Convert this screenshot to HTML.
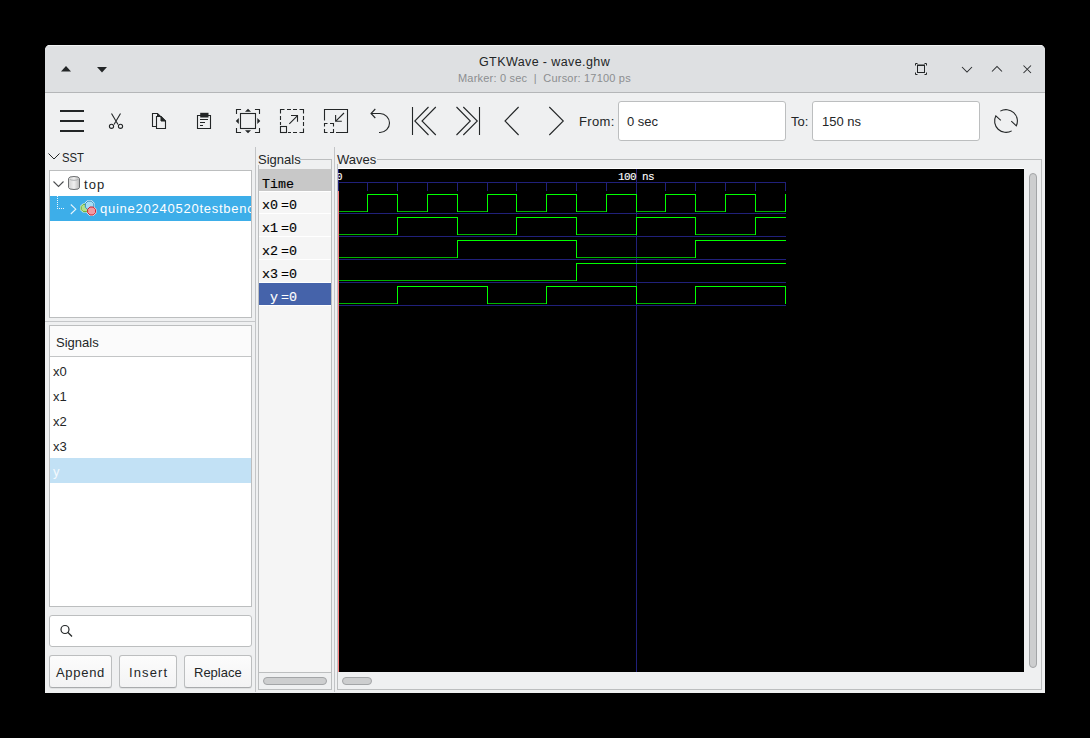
<!DOCTYPE html>
<html><head><meta charset="utf-8">
<style>
*{box-sizing:border-box;margin:0;padding:0}
html,body{width:1090px;height:738px;background:#000;overflow:hidden;font-family:"Liberation Sans",sans-serif;color:#232627}
.a{position:absolute}
.t{position:absolute;white-space:nowrap;line-height:1;font-size:13px}
.m{position:absolute;white-space:nowrap;line-height:1;font-family:"Liberation Mono",monospace;font-size:13.33px;color:#000;-webkit-text-stroke:0.15px currentColor}
svg{position:absolute;left:0;top:0;overflow:visible}
</style></head><body>
<!-- window -->
<div class="a" style="left:45px;top:45px;width:1000px;height:648px;background:#eff0f1;border-radius:5px 5px 0 0;overflow:hidden">
  <div class="a" style="left:0;top:0;width:1000px;height:47px;background:#dee0e2;border-top:1px solid #f2f3f4"></div>
  <div class="a" style="left:0;top:47px;width:1000px;height:1px;background:#b4b6b8"></div>
</div>
<!-- title -->
<div class="t" id="title" style="left:479px;top:56px;font-size:12.5px;letter-spacing:0.4px;color:#232627">GTKWave - wave.ghw</div>
<div class="t" id="sub" style="left:458px;top:73px;font-size:11px;letter-spacing:0.2px;color:#8c8e90">Marker: 0 sec &nbsp;|&nbsp; Cursor: 17100 ps</div>

<!-- list boxes -->
<div class="a" style="left:49px;top:170px;width:203px;height:148px;background:#fff;border:1px solid #bcbebf"></div>
<div class="a" style="left:50px;top:196px;width:201px;height:25px;background:#3daee9"></div>
<div class="a" style="left:45px;top:321px;width:210px;height:1px;background:#c5c7c9"></div>
<div class="a" style="left:49px;top:325px;width:203px;height:282px;background:#fff;border:1px solid #bcbebf"></div>
<div class="a" style="left:50px;top:326px;width:201px;height:31px;background:#fbfbfb;border-bottom:1px solid #c3c5c6"></div>
<div class="a" style="left:50px;top:458px;width:201px;height:25px;background:#c2e1f5"></div>
<!-- search -->
<div class="a" style="left:49px;top:615px;width:203px;height:32px;background:#fff;border:1px solid #bcbebf;border-radius:3px"></div>
<!-- buttons -->
<div class="a btn" style="left:49px;top:655px;width:63px;height:33px"></div>
<div class="a btn" style="left:119px;top:655px;width:58px;height:33px"></div>
<div class="a btn" style="left:184px;top:655px;width:68px;height:33px"></div>
<style>.btn{background:linear-gradient(#fcfcfc,#f3f3f4);border:1px solid #bcbebf;border-bottom-color:#a9abad;border-radius:3px;box-shadow:0 1px 0 rgba(0,0,0,0.06)}</style>

<!-- pane separators -->
<div class="a" style="left:255px;top:147px;width:1px;height:545px;background:#c3c5c7"></div>
<div class="a" style="left:334px;top:147px;width:1px;height:545px;background:#c3c5c7"></div>

<!-- signals frame -->
<div class="a" style="left:300px;top:159px;width:32px;height:1px;background:#bcbebf"></div>
<div class="a" style="left:258px;top:165px;width:1px;height:525px;background:#bcbebf"></div>
<div class="a" style="left:331px;top:159px;width:1px;height:531px;background:#bcbebf"></div>
<div class="a" style="left:258px;top:689px;width:74px;height:1px;background:#bcbebf"></div>
<div class="a" style="left:259px;top:169px;width:72px;height:503px;background:#f5f5f5"></div>
<div class="a" style="left:259px;top:672px;width:72px;height:1px;background:#bcbebf"></div>
<div class="a" style="left:259px;top:169px;width:72px;height:22px;background:#c8c8c8"></div>
<div class="a" style="left:259px;top:191px;width:72px;height:1px;background:#fff"></div>
<div class="a" style="left:259px;top:213px;width:72px;height:1px;background:#fff"></div>
<div class="a" style="left:259px;top:236px;width:72px;height:1px;background:#fff"></div>
<div class="a" style="left:259px;top:259px;width:72px;height:1px;background:#fff"></div>
<div class="a" style="left:259px;top:282px;width:72px;height:1px;background:#fff"></div>
<div class="a" style="left:259px;top:283px;width:72px;height:22px;background:#4563aa"></div>
<div class="a" style="left:259px;top:305px;width:72px;height:1px;background:#fff"></div>
<div class="a sl" style="left:263px;top:677px;width:64px;height:8px"></div>

<!-- waves frame -->
<div class="a" style="left:377px;top:159px;width:665px;height:1px;background:#bcbebf"></div>
<div class="a" style="left:337px;top:164px;width:1px;height:526px;background:#bcbebf"></div>
<div class="a" style="left:1041px;top:159px;width:1px;height:531px;background:#bcbebf"></div>
<div class="a" style="left:337px;top:689px;width:705px;height:1px;background:#bcbebf"></div>
<div class="a" style="left:338px;top:168px;width:686px;height:1px;background:#fff"></div>
<div class="a" style="left:338px;top:169px;width:686px;height:503px;background:#000"></div>
<div class="a sl" style="left:342px;top:677px;width:30px;height:8px"></div>
<div class="a sl" style="left:1029px;top:173px;width:8px;height:495px"></div>
<style>.sl{background:#cdcecf;border:1px solid #a3a5a7;border-radius:4px}</style>

<svg width="1090" height="738">
<path d="M338 182h448v1h-448zM367 183h1v8h-1zM397 183h1v8h-1zM427 183h1v8h-1zM457 183h1v8h-1zM487 183h1v8h-1zM516 183h1v8h-1zM546 183h1v8h-1zM576 183h1v8h-1zM606 183h1v8h-1zM665 183h1v8h-1zM695 183h1v8h-1zM725 183h1v8h-1zM755 183h1v8h-1zM785 183h1v8h-1zM338 213h448v1h-448zM338 236h448v1h-448zM338 259h448v1h-448zM338 282h448v1h-448zM338 305h448v1h-448zM636 169h1v503h-1zM338 169h1v22h-1z" fill="#20207a"/>
<path d="M339 211h29v1h-29zM397 211h31v1h-31zM457 211h31v1h-31zM516 211h31v1h-31zM576 211h31v1h-31zM636 211h30v1h-30zM695 211h31v1h-31zM755 211h31v1h-31zM339 234h59v1h-59zM457 234h60v1h-60zM576 234h61v1h-61zM695 234h61v1h-61zM339 257h119v1h-119zM576 257h120v1h-120zM339 280h238v1h-238zM339 303h59v1h-59zM487 303h60v1h-60zM636 303h60v1h-60z" fill="#00b400"/>
<path d="M367 194h31v1h-31zM427 194h31v1h-31zM487 194h30v1h-30zM546 194h31v1h-31zM606 194h31v1h-31zM665 194h31v1h-31zM725 194h31v1h-31zM397 217h61v1h-61zM516 217h61v1h-61zM636 217h60v1h-60zM755 217h31v1h-31zM457 240h120v1h-120zM695 240h91v1h-91zM576 263h210v1h-210zM397 286h91v1h-91zM546 286h91v1h-91zM695 286h91v1h-91zM367 194h1v18h-1zM397 194h1v18h-1zM427 194h1v18h-1zM457 194h1v18h-1zM487 194h1v18h-1zM516 194h1v18h-1zM546 194h1v18h-1zM576 194h1v18h-1zM606 194h1v18h-1zM636 194h1v18h-1zM665 194h1v18h-1zM695 194h1v18h-1zM725 194h1v18h-1zM755 194h1v18h-1zM785 194h1v18h-1zM397 217h1v18h-1zM457 217h1v18h-1zM516 217h1v18h-1zM576 217h1v18h-1zM636 217h1v18h-1zM695 217h1v18h-1zM755 217h1v18h-1zM457 240h1v18h-1zM576 240h1v18h-1zM695 240h1v18h-1zM576 263h1v18h-1zM397 286h1v18h-1zM487 286h1v18h-1zM546 286h1v18h-1zM636 286h1v18h-1zM695 286h1v18h-1zM785 286h1v18h-1z" fill="#00ff00"/>
<path d="M338 191h1v481h-1z" fill="#ff8080"/>

</svg>
<div class="a" style="left:338px;top:169px;width:686px;height:20px;overflow:hidden">
  <div class="m" style="left:-2px;top:2.5px;font-size:11px;color:#fff;-webkit-text-stroke:0.1px #fff">0</div>
  <div class="m" style="left:280px;top:3px;font-size:11px;letter-spacing:-0.6px;color:#fff;-webkit-text-stroke:0.1px #fff">100 ns</div>
</div>

<!-- texts -->
<div class="t" style="left:62px;top:151px;transform:scaleX(0.87);transform-origin:0 0">SST</div>
<div class="t" style="left:84px;top:178px;letter-spacing:1.1px">top</div>
<div class="a" style="left:50px;top:196px;width:201px;height:25px;overflow:hidden"><div class="t" style="left:50px;top:6px;color:#fff;letter-spacing:0.75px">quine20240520testbench</div></div>
<div class="t" style="left:56px;top:336px">Signals</div>
<div class="t" style="left:53px;top:365px">x0</div>
<div class="t" style="left:53px;top:390px">x1</div>
<div class="t" style="left:53px;top:415px">x2</div>
<div class="t" style="left:53px;top:440px">x3</div>
<div class="t" style="left:53px;top:465px;color:#f4f9fd">y</div>
<div class="t" style="left:56px;top:666px;letter-spacing:0.7px">Append</div>
<div class="t" style="left:129px;top:666px;letter-spacing:1.1px">Insert</div>
<div class="t" style="left:194px;top:666px">Replace</div>
<div class="t" style="left:258px;top:153px">Signals</div>
<div class="t" style="left:337px;top:153px">Waves</div>
<div class="t" style="left:579px;top:115px;letter-spacing:0.35px">From:</div>
<div class="t" style="left:791px;top:115px">To:</div>
<div class="a" style="left:618px;top:101px;width:168px;height:40px;background:#fff;border:1px solid #bcbebf;border-radius:3px"></div>
<div class="a" style="left:812px;top:101px;width:168px;height:40px;background:#fff;border:1px solid #bcbebf;border-radius:3px"></div>
<div class="t" style="left:627px;top:115px">0 sec</div>
<div class="t" style="left:822px;top:115px">150 ns</div>

<div class="m" style="left:262px;top:178px">Time</div>
<div class="m" style="left:262px;top:199px">x0</div>
<div class="m" style="left:281px;top:199px">=0</div>
<div class="m" style="left:262px;top:222px">x1</div>
<div class="m" style="left:281px;top:222px">=0</div>
<div class="m" style="left:262px;top:245px">x2</div>
<div class="m" style="left:281px;top:245px">=0</div>
<div class="m" style="left:262px;top:268px">x3</div>
<div class="m" style="left:281px;top:268px">=0</div>
<div class="m" style="left:270px;top:291px;color:#fff">y</div>
<div class="m" style="left:281px;top:291px;color:#fff">=0</div>

<!-- icons -->
<svg width="1090" height="738" fill="none" stroke="#232627" stroke-width="1">
  <path d="M61 71.5L66 66L71 71.5Z" fill="#232627" stroke="none"/>
  <path d="M97 67L107 67L102 72.5Z" fill="#232627" stroke="none"/>
  <!-- title buttons -->
  <g stroke="#2a2c2e" stroke-width="1.05">
   <path d="M962 67L967 72L972 67"/>
   <path d="M992 71.5L997 66.5L1002 71.5"/>
   <path d="M1023.5 65.5L1031 73M1031 65.5L1023.5 73"/>
  </g>
  <rect x="917.5" y="65.5" width="7" height="7" stroke="#232627"/>
  <rect x="917" y="64.5" width="8" height="1.5" fill="#232627" stroke="none"/>
  <path d="M915.5 65.5V63.5H917.5M926.5 65.5V63.5H924.5M915.5 72.5V74.5H917.5M926.5 72.5V74.5H924.5" stroke="#232627" stroke-width="1"/>
  <!-- hamburger -->
  <path d="M60 110h24v2h-24zM60 120h24v2h-24zM60 130h24v2h-24z" fill="#232627" stroke="none"/>
  <!-- scissors -->
  <path d="M111.5 113.5L118 124.5M120.5 113.5L114 124.5" stroke-width="1.1"/>
  <circle cx="111.5" cy="126.3" r="2.1" stroke-width="1.1"/>
  <circle cx="120.5" cy="126.3" r="2.1" stroke-width="1.1"/>
  <!-- copy -->
  <path d="M156.5 126.5H152.5V113.5H157.5L161 117" stroke-width="1.1"/>
  <path d="M157 113.5L161 117H157Z" fill="#232627" stroke="none"/>
  <path d="M156.5 117V128.5H165.5V121L161 116.5H156.5Z" stroke-width="1.1"/>
  <path d="M161 116.5V121H165.5Z" fill="#232627"/>
  <!-- paste -->
  <path d="M202 115.5H197.5V128.5H210.5V115.5H206" stroke-width="1.1"/>
  <rect x="200.2" y="112.8" width="8.3" height="4.7" fill="#232627" stroke="none"/>
  <path d="M200 119.5h8M200 122.5h5M200 125.5h3" stroke-width="1"/>
  <!-- zoom fit -->
  <path d="M236.5 113.5V109.5H240.5M255.5 109.5H259.5V113.5M259.5 128.5V132.5H255.5M240.5 132.5H236.5V128.5" stroke-width="1.1" stroke-linecap="square"/>
  <rect x="240.5" y="113.5" width="15" height="15" stroke-width="1.1"/>
  <path d="M245 111.8L248 108.8L251 111.8ZM245 130.3L248 133.3L251 130.3ZM238.8 118L235.8 121L238.8 124ZM257.3 118L260.3 121L257.3 124Z" fill="#232627" stroke="none"/>
  <!-- zoom in -->
  <path d="M280.5 113.5V109.5H284.5M287 109.5H291M293 109.5H297M299.5 109.5H303.5V113.5M303.5 116V120M303.5 122V126M303.5 128.5V132.5H299.5M297 132.5H293M291 132.5H288M280.5 116V120M280.5 122V125" stroke-width="1.1" stroke-linecap="butt"/>
  <rect x="280.5" y="126.5" width="6" height="6" stroke-width="1.1"/>
  <path d="M289.3 123.8L297.3 115.8M291 115.5H297.5V121.7" stroke-width="1.1"/>
  <!-- zoom out -->
  <path d="M324.5 120.5V109.5H347.5V132.5H336" stroke-width="1.1"/>
  <path d="M324.5 126.5V123.5H327.5M330 123.5H333.5V126.5M333.5 129V132.5H330M327.5 132.5H324.5V129" stroke-width="1.1"/>
  <path d="M344 113L335.8 121.2M335.6 115V121.3H341.8" stroke-width="1.1"/>
  <!-- undo -->
  <path d="M375.3 109L371 113.5L375.3 118M371 113.5H380A9.5 9.5 0 0 1 380 132.5H379" stroke-width="1.1"/>
  <!-- first/last -->
  <path d="M412.5 107V135M428.5 107L414.8 121L428.5 135M435.8 107L422 121L435.8 135" stroke-width="1.1"/>
  <path d="M479.5 107V135M456.5 107L470.3 121L456.5 135M463.3 107L477.3 121L463.3 135" stroke-width="1.1"/>
  <path d="M518.6 107L505 121L518.6 135M549.3 107L563.3 121L549.3 135" stroke-width="1.1"/>
  <!-- refresh -->
  <path d="M1000.30 111.13A11.4 11.4 0 0 1 1016.33 125.82L1011.3 121.1" stroke-width="1.1"/>
  <path d="M1011.70 130.87A11.4 11.4 0 0 1 995.84 115.82L1000.8 120.3" stroke-width="1.1"/>
  <!-- SST expander -->
  <path d="M48.5 153.5L54 159L59.5 153.5" stroke-width="1"/>
  <path d="M53.5 181.5L58.5 186.5L63.5 181.5" stroke="#4d4f51" stroke-width="1.1"/>
  <path d="M57 196h1v1h-1zM57 198h1v1h-1zM57 200h1v1h-1zM57 202h1v1h-1zM57 204h1v1h-1zM57 206h1v1h-1zM57 208h1v1h-1zM59 208h1v1h-1zM61 208h1v1h-1zM63 208h1v1h-1z" fill="#f0f8fd" stroke="none"/>
  <path d="M70.8 204.5L75.8 209.2L70.8 214" stroke="#e6f4fc" stroke-width="1.1"/>
  <!-- cylinder -->
  <defs><linearGradient id="cg" x1="0" x2="1"><stop offset="0" stop-color="#d0d0d0"/><stop offset=".5" stop-color="#f0f0f0"/><stop offset="1" stop-color="#b8b8b8"/></linearGradient></defs>
  <path d="M68.5 178.5Q68.5 176.5 74 176.5Q79.5 176.5 79.5 178.5V187.5Q79.5 189.5 74 189.5Q68.5 189.5 68.5 187.5Z" fill="url(#cg)" stroke="#6d6f71" stroke-width="1"/>
  <path d="M69.5 178.8Q69.5 180.3 74 180.3Q78.5 180.3 78.5 178.8" stroke="#a0a2a4" stroke-width="0.8"/>
  <!-- module icon -->
  <path d="M88.50 209.53L86.33 211.70L83.27 211.70L81.10 209.53L81.10 206.47L83.27 204.30L86.33 204.30L88.50 206.47ZM93.85 207.16L91.36 209.65L87.84 209.65L85.35 207.16L85.35 203.64L87.84 201.15L91.36 201.15L93.85 203.64ZM95.57 212.65L93.25 214.97L89.95 214.97L87.63 212.65L87.63 209.35L89.95 207.03L93.25 207.03L95.57 209.35Z" fill="#fff" stroke="#fff" stroke-width="1.8" stroke-linejoin="round"/>
  <path d="M88.50 209.53L86.33 211.70L83.27 211.70L81.10 209.53L81.10 206.47L83.27 204.30L86.33 204.30L88.50 206.47Z" fill="#b5e08a" stroke="#5aa82a" stroke-width="1"/>
  <path d="M93.85 207.16L91.36 209.65L87.84 209.65L85.35 207.16L85.35 203.64L87.84 201.15L91.36 201.15L93.85 203.64Z" fill="#a6ddf5" stroke="#2d8cc0" stroke-width="1"/>
  <path d="M95.57 212.65L93.25 214.97L89.95 214.97L87.63 212.65L87.63 209.35L89.95 207.03L93.25 207.03L95.57 209.35Z" fill="#f19aa2" stroke="#c8202e" stroke-width="1"/>
  <!-- search -->
  <circle cx="65" cy="629.5" r="4" stroke-width="1.2"/>
  <path d="M68 632.5L72 636.5" stroke-width="1.3"/>
</svg>
</body></html>
